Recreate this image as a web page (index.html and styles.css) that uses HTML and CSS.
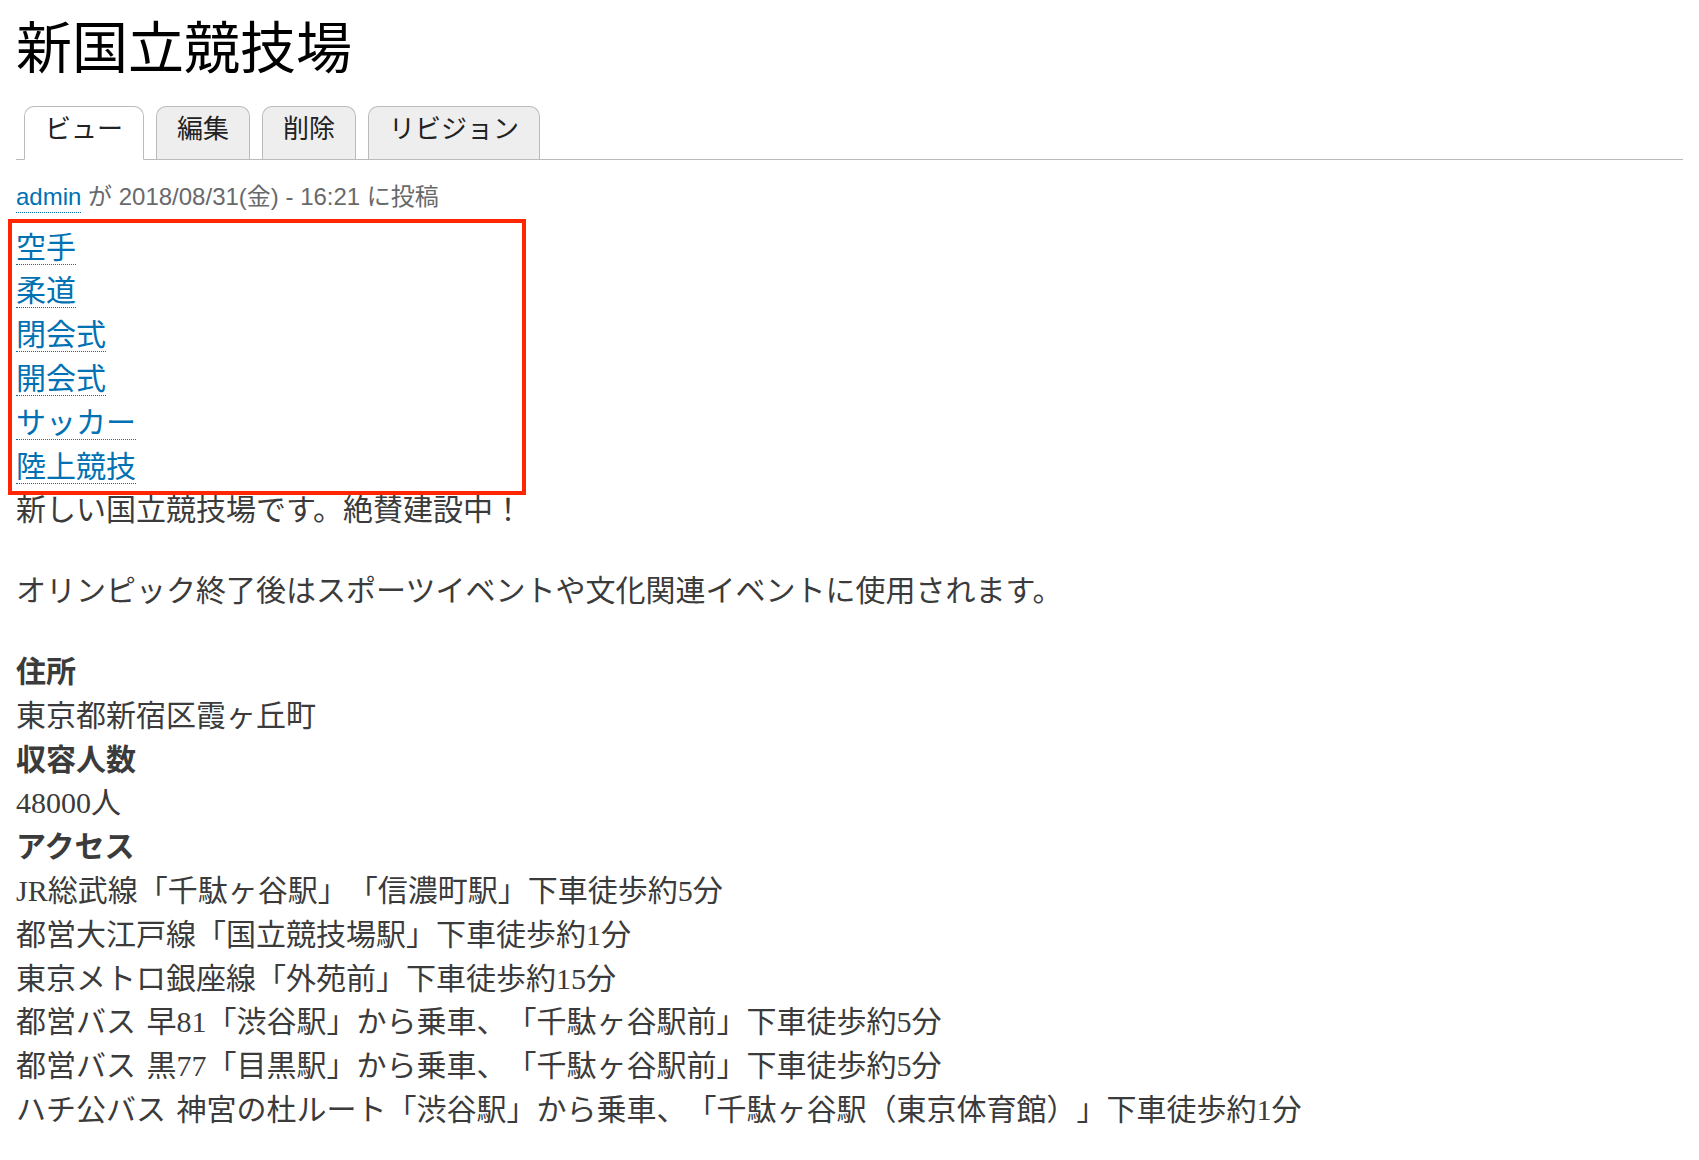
FILE: index.html
```html
<!DOCTYPE html>
<html lang="ja">
<head>
<meta charset="utf-8">
<title>新国立競技場</title>
<link rel="stylesheet" href="styles.css">
</head>
<body>
<main class="page">
  <h1 class="title">新国立競技場</h1>
  <nav class="tabs">
    <ul class="tabs-list">
      <li class="tab is-active"><a href="#">ビュー</a></li>
      <li class="tab"><a href="#">編集</a></li>
      <li class="tab"><a href="#">削除</a></li>
      <li class="tab"><a href="#">リビジョン</a></li>
    </ul>
  </nav>
  <div class="meta"><a class="link meta-link" href="#">admin</a> が 2018/08/31(金) - 16:21 に投稿</div>
  <div class="tags">
    <div class="tag"><a class="link" href="#">空手</a></div>
    <div class="tag"><a class="link" href="#">柔道</a></div>
    <div class="tag"><a class="link" href="#">閉会式</a></div>
    <div class="tag"><a class="link" href="#">開会式</a></div>
    <div class="tag"><a class="link" href="#">サッカー</a></div>
    <div class="tag"><a class="link" href="#">陸上競技</a></div>
    <div class="highlight"></div>
  </div>
  <div class="body">
    <p>新しい国立競技場です。絶賛建設中！</p>
    <p>オリンピック終了後はスポーツイベントや文化関連イベントに使用されます。</p>
  </div>
  <div class="fields">
    <div class="field">
      <div class="field-label">住所</div>
      <div class="field-item">東京都新宿区霞ヶ丘町</div>
    </div>
    <div class="field">
      <div class="field-label">収容人数</div>
      <div class="field-item">48000人</div>
    </div>
    <div class="field">
      <div class="field-label">アクセス</div>
      <div class="field-item">
        <div>JR総武線「千駄ヶ谷駅」「信濃町駅」下車徒歩約5分</div>
        <div>都営大江戸線「国立競技場駅」下車徒歩約1分</div>
        <div>東京メトロ銀座線「外苑前」下車徒歩約15分</div>
        <div>都営バス 早81「渋谷駅」から乗車、「千駄ヶ谷駅前」下車徒歩約5分</div>
        <div>都営バス 黒77「目黒駅」から乗車、「千駄ヶ谷駅前」下車徒歩約5分</div>
        <div>ハチ公バス 神宮の杜ルート「渋谷駅」から乗車、「千駄ヶ谷駅（東京体育館）」下車徒歩約1分</div>
      </div>
    </div>
  </div>
</main>
</body>
</html>
```

FILE: styles.css
```css
html,
body {
  margin: 0;
  padding: 0;
  background: #fff;
}

body {
  color: #3b3b3b;
  font-family: "Liberation Serif", "Noto Sans CJK JP", serif;
  font-size: 30px;
  line-height: 43.8px;
  word-spacing: 3px;
  text-spacing-trim: space-all;
}

.page {
  padding: 0 16px;
}

.title {
  margin: 11px 0 0;
  font-family: "Noto Sans CJK JP", sans-serif;
  font-size: 56px;
  line-height: 66px;
  font-weight: 400;
  color: #000;
}

.tabs-list {
  display: flex;
  align-items: flex-end;
  gap: 12px;
  list-style: none;
  margin: 29px 0 0;
  padding: 0 0 0 8px;
  border-bottom: 1px solid #bbb;
}

.tab a {
  display: block;
  font-family: "Noto Sans CJK JP", sans-serif;
  font-size: 26px;
  line-height: 40px;
  word-spacing: 0;
  padding: 0 20px 12px;
  color: #222;
  text-decoration: none;
  background: #eee;
  border: 1px solid #bbb;
  border-bottom: 0;
  border-radius: 10px 10px 0 0;
}

.tab.is-active a {
  background: #fff;
  border-bottom: 1px solid #fff;
  margin-bottom: -1px;
}

.meta {
  margin-top: 18.7px;
  font-family: "Liberation Sans", "Noto Sans CJK JP", sans-serif;
  font-size: 24px;
  line-height: 36px;
  word-spacing: 0;
  color: #68696b;
}

.link {
  color: #0071b3;
  text-decoration: none;
  border-bottom: 1px dotted #0071b3;
}

.meta-link {
  padding-bottom: 2px;
}

.tags {
  position: relative;
  margin-top: 11px;
}

.highlight {
  position: absolute;
  top: -6.8px;
  left: -8px;
  width: 518px;
  height: 276px;
  box-sizing: border-box;
  border: 4px solid #ff2600;
  pointer-events: none;
}

.body p {
  margin: 0 0 37px;
}

.field-label {
  font-weight: 700;
}
```
